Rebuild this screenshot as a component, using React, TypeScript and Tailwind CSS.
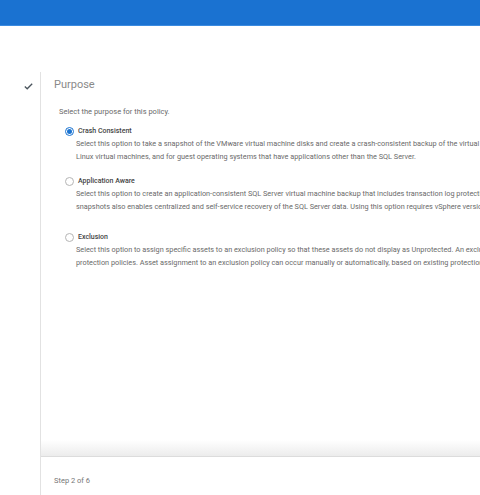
import React from 'react';

const options = [
  {
    id: 'crash',
    label: 'Crash Consistent',
    selected: true,
    lines: [
      'Select this option to take a snapshot of the VMware virtual machine disks and create a crash-consistent backup of the virtual machines running Windows and',
      'Linux virtual machines, and for guest operating systems that have applications other than the SQL Server.',
    ],
  },
  {
    id: 'app',
    label: 'Application Aware',
    selected: false,
    lines: [
      'Select this option to create an application-consistent SQL Server virtual machine backup that includes transaction log protection. Application-aware',
      'snapshots also enables centralized and self-service recovery of the SQL Server data. Using this option requires vSphere version 6.5 or later.',
    ],
  },
  {
    id: 'exclusion',
    label: 'Exclusion',
    selected: false,
    lines: [
      'Select this option to assign specific assets to an exclusion policy so that these assets do not display as Unprotected. An excluded asset cannot belong to other',
      'protection policies. Asset assignment to an exclusion policy can occur manually or automatically, based on existing protection rules.',
    ],
  },
];

function Radio({ checked }: { checked: boolean }) {
  if (checked) {
    return (
      <span className="flex h-[9px] w-[9px] shrink-0 items-center justify-center rounded-full border border-[#1a73d1] bg-white">
        <span className="h-[5px] w-[5px] rounded-full bg-[#1a73d1]" />
      </span>
    );
  }
  return <span className="h-[9px] w-[9px] shrink-0 rounded-full border border-[#b5b5b5] bg-white" />;
}

export default function App() {
  return (
    <div
      className="flex h-[495px] w-[480px] flex-col overflow-hidden bg-white"
      style={{ fontFamily: 'Roboto, "Liberation Sans", sans-serif' }}
    >
      <div className="h-[26px] shrink-0 border-b border-[#3b8be0] bg-[#1a72d1]" />
      <div className="h-[46px] shrink-0" />
      <div className="flex min-h-0 flex-1">
        <div className="flex w-[40px] shrink-0 justify-center pt-[10px] pl-[17px]">
          <svg width="9" height="7" viewBox="0 0 9 7" className="mt-[1px]">
            <path d="M0.8 3.6 L3.2 5.8 L8.2 0.8" fill="none" stroke="#4a545c" strokeWidth="1.3" />
          </svg>
        </div>
        <div className="flex min-w-0 flex-1 flex-col border-l border-[#e2e2e2]">
          <div className="min-h-0 flex-1 overflow-hidden pl-[13px]">
            <div className="mt-[6px] text-[11px] leading-[14px] whitespace-nowrap text-[#8a8a8a]">Purpose</div>
            <div className="mt-[15px] pl-[5px] text-[7.5px] leading-[10px] whitespace-nowrap text-[#6a6a6a]">
              Select the purpose for this policy.
            </div>
            <div className="mt-[9px] flex flex-col pl-[11px]">
              {options.map((o, i) => (
                <div key={o.id} className={i === 0 ? '' : i === 1 ? 'mt-[13px]' : 'mt-[19px]'}>
                  <div className="flex items-center gap-[4px] whitespace-nowrap">
                    <Radio checked={o.selected} />
                    <span className="text-[7px] leading-[10px] font-medium text-[#444]">{o.label}</span>
                  </div>
                  <div className="mt-[1px] pl-[11px] text-[7.3px] leading-[13px] whitespace-nowrap text-[#6a6a6a]">
                    {o.lines.map((l) => (
                      <div key={l}>{l}</div>
                    ))}
                  </div>
                </div>
              ))}
            </div>
          </div>
          <div className="h-[16px] shrink-0 bg-gradient-to-b from-white to-[#ececec]" />
          <div className="h-[39px] shrink-0 border-t border-[#dcdcdc] pt-[19px] pl-[13px] text-[7.5px] leading-[10px] text-[#777]">
            Step 2 of 6
          </div>
        </div>
      </div>
    </div>
  );
}
